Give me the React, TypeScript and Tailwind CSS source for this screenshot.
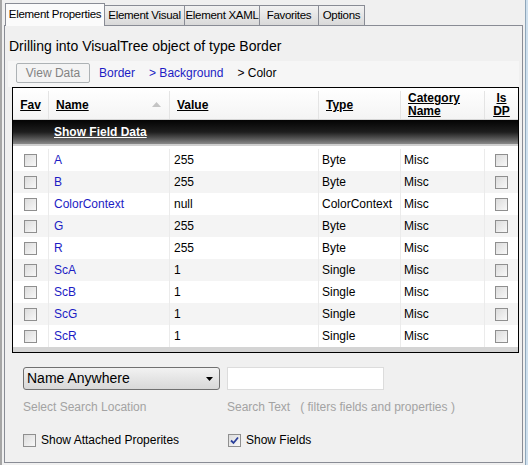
import React from 'react';

const font = { fontFamily: '"Liberation Sans", Arial, sans-serif' };

const rows = [
  { name: 'A', value: '255', type: 'Byte' },
  { name: 'B', value: '255', type: 'Byte' },
  { name: 'ColorContext', value: 'null', type: 'ColorContext' },
  { name: 'G', value: '255', type: 'Byte' },
  { name: 'R', value: '255', type: 'Byte' },
  { name: 'ScA', value: '1', type: 'Single' },
  { name: 'ScB', value: '1', type: 'Single' },
  { name: 'ScG', value: '1', type: 'Single' },
  { name: 'ScR', value: '1', type: 'Single' },
];

function Box({ checked = false }: { checked?: boolean }) {
  return (
    <span className="flex h-[13px] w-[13px] items-center justify-center border border-[#8f8f8f] bg-gradient-to-br from-[#dcdcdc] to-[#f8f8f8]">
      {checked && (
        <svg width="9" height="9" viewBox="0 0 9 9">
          <path d="M1 4.5 L3.5 7 L8 1.5" fill="none" stroke="#2a3f9a" strokeWidth="1.8" />
        </svg>
      )}
    </span>
  );
}

const tabs = [
  { label: 'Element Visual', w: 'w-[81px]' },
  { label: 'Element XAML', w: 'w-[76px]' },
  { label: 'Favorites', w: 'w-[60px]' },
  { label: 'Options', w: 'w-[47px]' },
];

export default function App() {
  return (
    <div className="flex h-[465px] w-[528px] overflow-hidden bg-[#f0f0f0] text-[12px] text-black" style={font}>
      <div className="w-[4px] bg-[#a6a6a6]" />
      <div className="flex flex-1 flex-col pb-[2px] pl-[2px] pt-[3px]">
        {/* Tabs */}
        <div className="flex h-[22px] items-end pl-px">
          <div className="relative z-10 -mb-px flex h-[23px] w-[100px] items-center justify-center whitespace-nowrap border border-b-0 border-[#898c95] bg-[#fbfbfb] text-[11.5px] tracking-[-0.3px]">
            Element Properties
          </div>
          {tabs.map((t) => (
            <div
              key={t.label}
              className={`-ml-px flex h-[20px] ${t.w} items-center justify-center whitespace-nowrap border border-b-0 border-[#898c95] bg-gradient-to-b from-[#f2f2f2] to-[#d9d9d9] text-[11.5px] tracking-[-0.3px]`}
            >
              {t.label}
            </div>
          ))}
        </div>

        {/* Panel */}
        <div className="flex flex-1 flex-col border border-[#898c95] bg-[#f0f0f0] pl-[3px] pr-[3px]">
          <div className="pl-px pt-[11px] text-[14px] leading-[18px]">Drilling into VisualTree object of type Border</div>

          <div className="mt-[6px] flex h-[26px] items-center bg-[#f6f6f6] pb-[2px] pl-[8px]">
            <button className="flex h-[20px] w-[74px] items-center justify-center rounded-[2px] border border-[#adb2b5] bg-[#f4f4f4] text-[12px] text-[#838383]">
              View Data
            </button>
            <span className="ml-[9px] text-[#1c1cc4]">Border</span>
            <span className="ml-[14px] text-[#1c1cc4]">&gt; Background</span>
            <span className="ml-[14px]">&gt; Color</span>
          </div>

          {/* Grid */}
          <div className="ml-[4px] mr-0 w-[507px] border border-black bg-white">
            <div className="flex h-[32px] border-b border-[#d5d5d5] bg-gradient-to-b from-white to-[#f4f4f4] pt-[3px] text-[12px] font-bold underline">
              <div className="flex w-[36px] items-center justify-center border-r border-[#e4e4e4]">Fav</div>
              <div className="relative flex w-[121px] items-center border-r border-[#e4e4e4] pl-[7px]">
                Name
                <svg className="absolute right-[8px] top-[11px]" width="9" height="5" viewBox="0 0 9 5">
                  <path d="M0 5 L4.5 0 L9 5 Z" fill="#c4c4c4" />
                </svg>
              </div>
              <div className="flex w-[149px] items-center border-r border-[#e4e4e4] pl-[7px]">Value</div>
              <div className="flex w-[82px] items-center border-r border-[#e4e4e4] pl-[7px]">Type</div>
              <div className="flex w-[84px] flex-col justify-center border-r border-[#e4e4e4] pl-[7px] leading-[13px]">
                <span>Category</span>
                <span>Name</span>
              </div>
              <div className="flex flex-1 flex-col items-center justify-center leading-[13px]">
                <span>Is</span>
                <span>DP</span>
              </div>
            </div>

            <div className="flex h-[26px] items-center border-b-2 border-[#cfcfcf] bg-gradient-to-b from-[#050505] via-[#1e1e1e] to-[#8a8a8a] pl-[41px] text-[12px] font-bold text-white underline">
              Show Field Data
            </div>

            <div className="pt-[3px]">
              {rows.map((r, i) => (
                <div key={r.name} className={`flex h-[22px] items-center ${i % 2 === 1 ? 'bg-[#f4f4f4]' : 'bg-white'}`}>
                  <div className="flex h-full w-[36px] items-center justify-center border-r border-[#ebebeb]">
                    <Box />
                  </div>
                  <div className="flex h-full w-[121px] items-center border-r border-[#ebebeb] pl-[5px] text-[#1c1cc4]">{r.name}</div>
                  <div className="flex h-full w-[149px] items-center border-r border-[#ebebeb] pl-[4px]">{r.value}</div>
                  <div className="flex h-full w-[82px] items-center border-r border-[#ebebeb] pl-[3px]">{r.type}</div>
                  <div className="flex h-full w-[84px] items-center border-r border-[#ebebeb] pl-[3px]">Misc</div>
                  <div className="flex h-full flex-1 items-center justify-center">
                    <Box />
                  </div>
                </div>
              ))}
            </div>
            <div className="h-[5px] bg-[#d4d4d4]" />
          </div>

          {/* Search area */}
          <div className="ml-[15px] mt-[14px] flex gap-[7px]">
            <div className="flex w-[197px] flex-col">
              <div className="flex h-[23px] items-center justify-between rounded-[3px] border border-[#707070] bg-gradient-to-b from-[#f2f2f2] to-[#d8d8d8] pl-[3px] pr-[6px] text-[14px]">
                <span>Name Anywhere</span>
                <svg width="7" height="4" viewBox="0 0 7 4">
                  <path d="M0 0 L7 0 L3.5 4 Z" fill="#000" />
                </svg>
              </div>
              <div className="mt-[8px] text-[12px] text-[#a3a3a3]">Select Search Location</div>
            </div>
            <div className="flex flex-col">
              <div className="h-[23px] w-[157px] border border-[#dcdcdc] bg-white" />
              <div className="mt-[8px] text-[12px] text-[#a3a3a3]">
                Search Text&nbsp;&nbsp;&nbsp;( filters fields and properties )
              </div>
            </div>
          </div>

          <div className="ml-[15px] mt-[15px] flex items-center">
            <div className="flex w-[205px] items-center gap-[5px]">
              <Box />
              <span>Show Attached Properites</span>
            </div>
            <div className="flex items-center gap-[5px]">
              <Box checked />
              <span>Show Fields</span>
            </div>
          </div>
        </div>
      </div>
      <div className="flex w-[5px]">
        <div className="w-[2px] bg-[#f0f0f0]" />
        <div className="w-px bg-[#8fa6b9]" />
        <div className="w-[2px] bg-[#cfe0ee]" />
      </div>
    </div>
  );
}
